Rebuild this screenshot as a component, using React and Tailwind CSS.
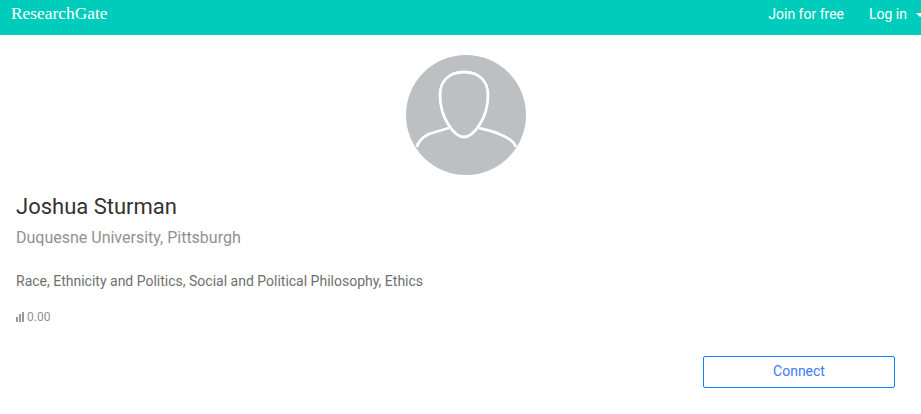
const Avatar = () => {
    return (
        <svg width="120" height="120" viewBox="0 0 120 120" className="block">
            <circle cx="60" cy="60" r="60" fill="#bdc0c3" />
            <path d="M58 17 C42 17 34 27 34 40 C34 50 37 61 42 69 C47 77 52 82 58 82 C64 82 69 77 74 69 C79 61 82 50 82 40 C82 27 74 17 58 17 Z" fill="none" stroke="#fff" strokeWidth="2.8" />
            <path d="M11 92 C12 87 15 83 23 79 C29 77 36 75 43 73" fill="none" stroke="#fff" strokeWidth="2.8" />
            <path d="M73 73 C80 75 87 76 93 79 C101 82 108 86 110 92" fill="none" stroke="#fff" strokeWidth="2.8" />
        </svg>
    )
}

const App = () => {
    return (
        <div className="w-[921px] h-[414px] overflow-hidden bg-white font-['Roboto',sans-serif]">
            <div className="h-[35px] bg-[#00ccbb] flex items-center justify-between pl-[11px] text-white">
                <span className="font-['Liberation_Serif',serif] text-[17.4px] leading-[27px] mb-2">ResearchGate</span>
                <div className="flex items-center text-[14px] mb-[6px] translate-x-[3px]">
                    <span>Join for free</span>
                    <span className="ml-[25px]">Log in</span>
                    <span className="ml-[9px] w-0 h-0 border-x-[4px] border-x-transparent border-t-[4px] border-t-white"></span>
                </div>
            </div>
            <div className="flex justify-center pt-5 pl-[10px]">
                <Avatar />
            </div>
            <div className="px-4">
                <h1 className="mt-[18px] text-[22px] leading-[28px] text-[#333]">Joshua Sturman</h1>
                <p className="mt-[7px] text-[16px] leading-[20px] text-[#919191]">Duquesne University, Pittsburgh</p>
                <p className="mt-[23px] text-[14px] leading-[20px] text-[#6f6f6f]">Race, Ethnicity and Politics, Social and Political Philosophy, Ethics</p>
                <div className="mt-[16px] flex items-center gap-[2px] text-[12px] leading-[20px] text-[#919191]">
                    <svg width="9" height="10" viewBox="0 0 9 10">
                        <rect x="0" y="5" width="2" height="5" fill="#999" />
                        <rect x="3" y="2" width="2" height="8" fill="#999" />
                        <rect x="6" y="0" width="2" height="10" fill="#999" />
                    </svg>
                    <span>0.00</span>
                </div>
            </div>
            <div className="flex justify-end pr-[26px] mt-[29px]">
                <button className="w-[192px] h-[32px] pb-[2px] rounded-[2px] border border-[#0a84ff] text-[#3b7bff] text-[14px]">Connect</button>
            </div>
        </div>
    )
}

export default App;
